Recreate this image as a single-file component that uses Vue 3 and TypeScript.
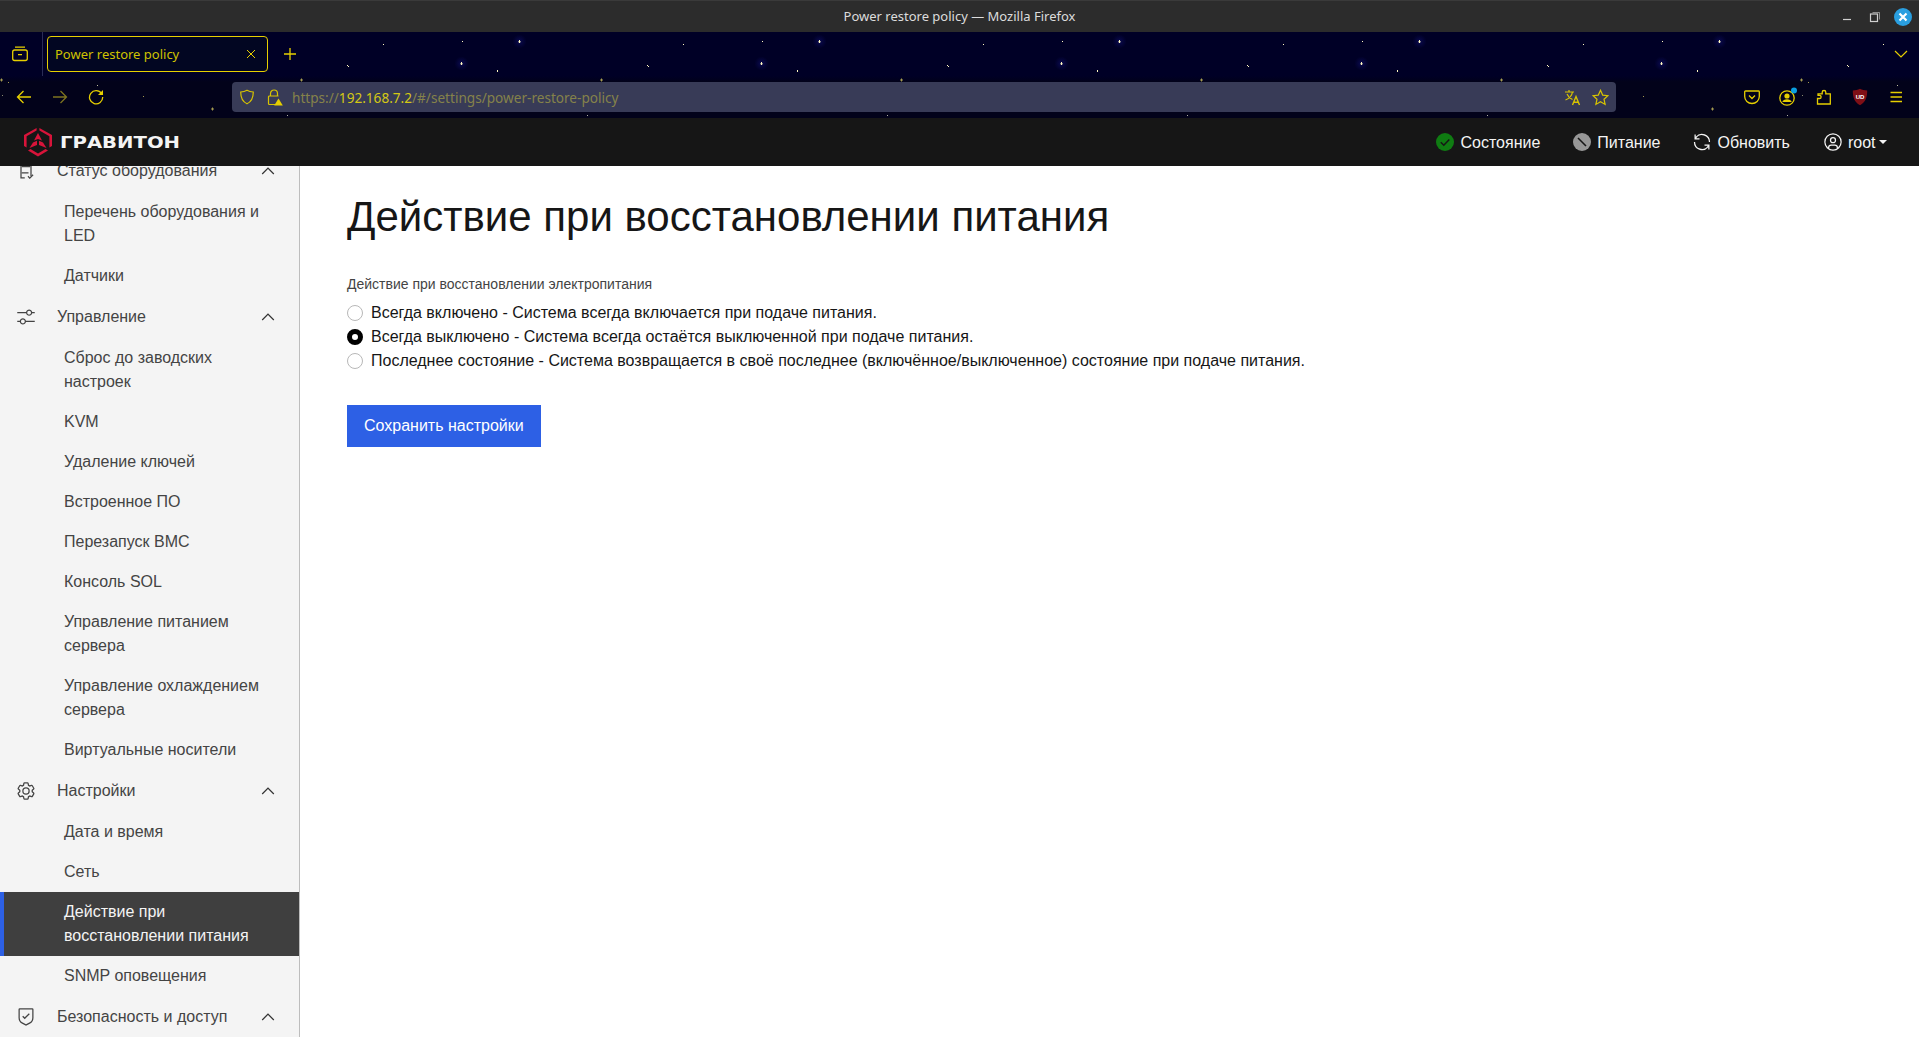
<template>
  <div class="page">
    <div class="titlebar">
      <span />
      <span class="window-title">Power restore policy — Mozilla Firefox</span>
      <div class="window-controls">
        <svg width="12" height="12" viewBox="0 0 12 12"><path d="M2 8.500h8" stroke="#d0d0d0" stroke-width="1.200" /></svg>
        <svg class="restore-icon" width="14" height="14" viewBox="0 0 14 14" fill="none" stroke="#d0d0d0">
          <path d="M4.500 2.500h7v7" opacity=".6" />
          <rect x="2.500" y="4" width="7" height="7.500" stroke-width="1.200" />
        </svg>
        <div class="close-btn">
          <svg width="10" height="10" viewBox="0 0 10 10"><path d="M1.500 1.500l7 7M8.500 1.500l-7 7" stroke="#fff" stroke-width="2.200" /></svg>
        </div>
      </div>
    </div>

    <div class="chrome">
      <svg class="stars" width="100%" height="86">
        <defs>
          <radialGradient id="glow">
            <stop offset="0" stop-color="#0a0a50" />
            <stop offset="1" stop-color="#0a0a50" stop-opacity="0" />
          </radialGradient>
          <pattern id="tile" width="300" height="86" patternUnits="userSpaceOnUse">
            <circle cx="219.500" cy="9.500" r="7" fill="url(#glow)" />
            <circle cx="161.500" cy="31.500" r="7" fill="url(#glow)" />
            <rect v-for="(s, i) in stars" :key="i" :x="s[0]" :y="s[1]" :width="s[2]" :height="s[3]" :fill="s[4]" />
          </pattern>
        </defs>
        <rect width="100%" height="86" fill="url(#tile)" />
      </svg>

      <div class="tabs-row">
        <button class="view-btn">
          <svg width="18" height="18" viewBox="0 0 18 18" fill="none" stroke="#e6cf00" stroke-width="1.300">
            <rect x="1.700" y="5" width="14.600" height="10.500" rx="2" />
            <path d="M4 2.200h10M7 9.600h4" />
          </svg>
        </button>
        <div class="tab">
          <span class="tab-title">Power restore policy</span>
          <svg width="10" height="10" viewBox="0 0 10 10"><path d="M1 1l8 8M9 1l-8 8" stroke="#e6cf00" stroke-width="1" /></svg>
        </div>
        <button class="plus-btn">
          <svg width="14" height="14" viewBox="0 0 14 14"><path d="M7 1v12M1 7h12" stroke="#e6cf00" stroke-width="1.300" /></svg>
        </button>
        <div class="tabs-fill" />
        <svg class="tabs-chevron" width="14" height="8" viewBox="0 0 14 8" fill="none"><path d="M1 1l6 6 6-6" stroke="#e6cf00" stroke-width="1.200" /></svg>
      </div>

      <div class="nav-row">
        <button class="tool-btn">
          <svg width="16" height="16" viewBox="0 0 16 16" fill="none" stroke="#e6cf00" stroke-width="1.300"><path d="M15 8H1.500M7.500 2l-6 6 6 6" /></svg>
        </button>
        <button class="tool-btn">
          <svg width="16" height="16" viewBox="0 0 16 16" fill="none" stroke="#7d7420" stroke-width="1.300"><path d="M1 8h13.500M8.500 2l6 6-6 6" /></svg>
        </button>
        <button class="tool-btn">
          <svg width="16" height="16" viewBox="0 0 16 16" fill="none" stroke="#e6cf00" stroke-width="1.300">
            <path d="M13.600 4.600A6.600 6.600 0 1 0 14.700 8" />
            <path d="M15 1v5h-5z" fill="#e6cf00" stroke="none" />
          </svg>
        </button>
        <div class="urlbar">
          <svg width="16" height="16" viewBox="0 0 16 16" fill="none" stroke="#d8c400" stroke-width="1.200">
            <path d="M8 1.200c2 1.100 4 1.600 6.300 1.800 0 5.600-1.600 9.600-6.300 11.800C3.300 12.600 1.700 8.600 1.700 3 4 2.800 6 2.300 8 1.200z" />
          </svg>
          <svg class="lock" width="16" height="17" viewBox="0 0 16 17" fill="none" stroke="#d8c400" stroke-width="1.200">
            <path d="M3.500 7V4.500a3.500 3.500 0 0 1 7 0V7M8 15.500H2.500a1 1 0 0 1-1-1V8a1 1 0 0 1 1-1h9" />
            <path d="M11.500 9.500l4.300 7h-8.600z" fill="#e6cf00" stroke="none" />
          </svg>
          <span class="url"><span class="url-dim">https://</span>192.168.7.2<span class="url-dim">/#/settings/power-restore-policy</span></span>
          <div class="tabs-fill" />
          <svg width="17" height="17" viewBox="0 0 17 17" fill="none" stroke="#d8c400" stroke-width="1.200">
            <path d="M1 3h9M5 1v2M8.500 3C8 6 5.500 9.500 1.500 11M3 5c1 2.500 3 4.500 5.500 5.500" />
            <path d="M8.500 16l3.500-8.500 3.500 8.500M9.800 13.300h4.400" stroke-width="1.400" />
          </svg>
          <svg class="star-icon" width="17" height="17" viewBox="0 0 17 17" fill="none" stroke="#d8c400" stroke-width="1.200">
            <path d="M8.500 1.300l2.200 4.800 5.200.6-3.900 3.500 1.100 5.200-4.600-2.700-4.600 2.700 1.100-5.200L1.100 6.700l5.200-.6z" />
          </svg>
        </div>
        <button class="tool-btn">
          <svg width="16" height="16" viewBox="0 0 16 16" fill="none" stroke="#e6cf00" stroke-width="1.300">
            <path d="M1.500 2h13a.8.8 0 0 1 .8.8v4.700c0 4-3.300 7-7.300 7S.7 11.500.7 7.500V2.800a.8.8 0 0 1 .8-.8z" />
            <path d="M5 6.500l3 3 3-3" />
          </svg>
        </button>
        <button class="tool-btn">
          <svg width="20" height="20" viewBox="0 0 20 20">
            <circle cx="9" cy="11" r="7.200" fill="none" stroke="#e6cf00" stroke-width="1.300" />
            <circle cx="9" cy="9" r="2.600" fill="#e6cf00" />
            <path d="M4.300 15c.6-2 2.300-2.800 4.700-2.800s4.100.8 4.700 2.800z" fill="#e6cf00" />
            <circle cx="16" cy="3.500" r="3" fill="#0a9ee0" />
          </svg>
        </button>
        <button class="tool-btn">
          <svg width="16" height="16" viewBox="0 0 16 16" fill="none" stroke="#e6cf00" stroke-width="1.300">
            <path d="M1.500 9.500h2a1.600 1.600 0 0 0 0-3.200h-1.500V4.800h4.200V3.300a1.800 1.800 0 0 1 3.600 0v1.500h4.500V15H1.500z" />
          </svg>
        </button>
        <button class="tool-btn">
          <svg width="16" height="18" viewBox="0 0 16 18">
            <path d="M8 .8c2.200 1 4.500 1.500 7.200 1.700 0 6.500-1.500 11.800-7.200 14.700C2.300 14.300.8 9 .8 2.500 3.500 2.300 5.800 1.800 8 .8z" fill="#7f0f16" />
            <text x="8" y="10.500" class="ub-text">UD</text>
          </svg>
        </button>
        <button class="tool-btn">
          <svg width="14" height="12" viewBox="0 0 14 12"><path d="M1.500 1.500h11.500M1.500 6h11.500M1.500 10.500h11.500" stroke="#e6cf00" stroke-width="1.300" /></svg>
        </button>
      </div>
    </div>

    <header class="app-header">
      <div class="brand">
        <svg width="28" height="29" viewBox="0 0 28 29" fill="#d8143a">
          <path d="M12.600 0v2.600L2.600 8.300V19.500L0 18V6.900zM15.400 0v2.600l10 5.700V19.500L28 18V6.900z" />
          <path d="M4 22.500L14 28.600 24 22.500 21.500 21 14 25.600 6.500 21z" />
          <path d="M14 5l4 7.600L14 11 10 12.600zM9 14.500l4 -1.700V17l-7.500 3zM19 14.500l-4 -1.700V17l7.500 3z" />
        </svg>
        <svg class="brand-name" width="122" height="20">
          <text x="0" y="15.500" textLength="120" lengthAdjust="spacingAndGlyphs">ГРАВИТОН</text>
        </svg>
      </div>
      <div class="tabs-fill" />
      <div class="head-item">
        <svg class="head-icon" width="20" height="20" viewBox="0 0 20 20">
          <circle cx="10" cy="10" r="9" fill="#0f7c12" />
          <path d="M5.800 10.200l3 3 5.500-5.800" fill="none" stroke="#161616" stroke-width="1.500" />
        </svg>
        <span class="head-text">Состояние</span>
      </div>
      <div class="head-item">
        <svg class="head-icon" width="20" height="20" viewBox="0 0 20 20">
          <circle cx="10" cy="10" r="9" fill="#979797" />
          <path d="M6 6l8 8" stroke="#161616" stroke-width="1.600" />
        </svg>
        <span class="head-text">Питание</span>
      </div>
      <div class="head-item wide">
        <svg class="head-icon" width="20" height="20" viewBox="0 0 32 32" fill="#f4f4f4">
          <path d="M12 10H6.780A11 11 0 0 1 27 16h2A13 13 0 0 0 6 7.680V4H4v8h8zM20 22h5.220A11 11 0 0 1 5 16H3a13 13 0 0 0 23 8.320V28h2v-8h-8z" />
        </svg>
        <span class="head-text">Обновить</span>
      </div>
      <div class="head-item last">
        <svg class="head-icon" width="20" height="20" viewBox="0 0 32 32" fill="#f4f4f4">
          <path d="M16 8a5 5 0 1 0 5 5a5 5 0 0 0-5-5zm0 8a3 3 0 1 1 3-3a3 3 0 0 1-3 3z" />
          <path d="M16 2a14 14 0 1 0 14 14A14 14 0 0 0 16 2zm-6 24.377V25a3 3 0 0 1 3-3h6a3 3 0 0 1 3 3v1.377a11.899 11.899 0 0 1-12 0zm13.993-1.451A5 5 0 0 0 19 20h-6a5 5 0 0 0-4.992 4.926a12 12 0 1 1 15.985 0z" />
        </svg>
        <span class="head-text">root</span>
        <span class="caret" />
      </div>
    </header>

    <div class="body">
      <aside class="sidebar">
        <nav class="side-nav">
          <template v-for="group in groups" :key="group.title">
            <div class="group-row">
              <svg class="group-icon" width="20" height="20" viewBox="0 0 32 32" fill="#444">
                <path v-for="d in group.icon" :key="d" :d="d" />
              </svg>
              <span class="group-title">{{ group.title }}</span>
              <svg width="20" height="20" viewBox="0 0 32 32" fill="#333">
                <path d="M16 10l10 10-1.400 1.400L16 12.800l-8.600 8.600L6 20z" />
              </svg>
            </div>
            <a
              v-for="item in group.items"
              :key="item"
              class="nav-item"
              :class="{ active: item === activeItem }"
            >{{ item }}</a>
          </template>
        </nav>
      </aside>

      <main class="content">
        <h1>Действие при восстановлении питания</h1>
        <div class="field-label">Действие при восстановлении электропитания</div>
        <label v-for="opt in options" :key="opt.value" class="radio-row">
          <input v-model="policy" type="radio" name="policy" :value="opt.value" />
          <span>{{ opt.label }}</span>
        </label>
        <button class="save-btn">Сохранить настройки</button>
      </main>
    </div>
  </div>
</template>

<script setup lang="ts">
import { ref } from "vue";

interface NavGroup {
  title: string;
  icon: string[];
  items: string[];
}

// tile of the browser theme: x, y, w, h, colour (y counted from the tab strip)
const stars: [number, number, number, number, string][] = [
  [83, 12, 1, 1, "#fff8c0"],
  [47, 33, 1, 1, "#fff8c0"],
  [48, 34, 1, 1, "#fff8c0"],
  [162, 9, 1, 1, "#fff8c0"],
  [219, 9, 1, 1, "#fff8c0"],
  [218, 9.5, 3, 0.7, "#fff8c0"],
  [219, 8, 1, 3, "#fff8c0"],
  [161, 31, 1, 1, "#fff8c0"],
  [160, 31.5, 3, 0.7, "#fff8c0"],
  [161, 30, 1, 3, "#fff8c0"],
  [197, 38, 1, 2, "#fff8c0"],
  [0, 47.5, 3, 1, "#a39a50"],
  [1, 46.5, 1, 3, "#a39a50"],
  [8, 50, 1, 1, "#a39a50"],
  [2, 63, 1, 1, "#8a8a70"],
  [97, 53, 1, 1, "#c0c0a0"],
  [143, 64, 1, 1, "#a39a50"],
  [211, 76.5, 3, 1, "#a39a50"],
  [212, 75.5, 1, 3, "#a39a50"],
  [287, 83, 1, 1, "#b0b0a0"],
];

const statusIcon = [
  "M7 0h18v24h-2V2H9v24h5v2H7z",
  "M9 8h14v2H9zM9 18h11v2H9z",
  "M22 28.600l-3.500-3.500 1.400-1.400 2.100 2.100 4.600-4.600 1.400 1.400z",
];
const adjustIcon = [
  "M30 8h-4.100c-.5-2.300-2.500-4-4.900-4s-4.400 1.700-4.900 4H2v2h14.100c.5 2.300 2.500 4 4.900 4s4.400-1.700 4.900-4H30V8zm-9 4c-1.700 0-3-1.300-3-3s1.300-3 3-3s3 1.300 3 3s-1.300 3-3 3zM2 24h4.100c.5 2.300 2.500 4 4.900 4s4.400-1.700 4.900-4H30v-2H15.900c-.5-2.300-2.500-4-4.900-4s-4.400 1.700-4.900 4H2v2zm9-4c1.700 0 3 1.300 3 3s-1.300 3-3 3s-3-1.300-3-3s1.300-3 3-3z",
];
const settingsIcon = [
  "M27 16.760c0-.25 0-.5 0-.76s0-.51 0-.77l1.920-1.680A2 2 0 0 0 29.300 11L26.940 7a2 2 0 0 0-1.730-1a2 2 0 0 0-.64.1l-2.430.82a11.350 11.350 0 0 0-1.310-.75l-.51-2.520a2 2 0 0 0-2-1.610h-4.680a2 2 0 0 0-2 1.610l-.51 2.520a11.480 11.480 0 0 0-1.320.75l-2.380-.86A2 2 0 0 0 6.790 6a2 2 0 0 0-1.730 1L2.700 11a2 2 0 0 0 .41 2.510L5 15.240c0 .25 0 .5 0 .76s0 .51 0 .77l-1.890 1.680A2 2 0 0 0 2.700 21l2.360 4a2 2 0 0 0 1.730 1a2 2 0 0 0 .64-.1l2.430-.82a11.350 11.350 0 0 0 1.310.75l.51 2.520a2 2 0 0 0 2 1.610h4.720a2 2 0 0 0 2-1.610l.51-2.520a11.480 11.480 0 0 0 1.320-.75l2.420.82a2 2 0 0 0 .64.1a2 2 0 0 0 1.730-1l2.280-4a2 2 0 0 0-.41-2.510ZM25.210 24l-3.430-1.160a8.860 8.860 0 0 1-2.710 1.570L18.360 28h-4.720l-.71-3.550a9.360 9.360 0 0 1-2.700-1.570L6.790 24l-2.360-4l2.720-2.400a8.900 8.900 0 0 1 0-3.130L4.430 12l2.360-4l3.430 1.160a8.860 8.860 0 0 1 2.710-1.570L13.640 4h4.720l.71 3.550a9.360 9.360 0 0 1 2.700 1.570L25.210 8l2.360 4l-2.720 2.400a8.900 8.900 0 0 1 0 3.130L27.570 20Z",
  "M16 22a6 6 0 1 1 6-6a5.940 5.940 0 0 1-6 6Zm0-10a3.910 3.910 0 0 0-4 4a3.910 3.910 0 0 0 4 4a3.910 3.910 0 0 0 4-4a3.910 3.910 0 0 0-4-4Z",
];
const securityIcon = [
  "M14 16.590 11.410 14 10 15.410l4 4 8-8L20.590 10 14 16.590z",
  "M16 30l-6.180-3.300A11 11 0 0 1 4 17V4a2 2 0 0 1 2-2h20a2 2 0 0 1 2 2v13a11 11 0 0 1-5.820 9.700ZM6 4v13a9 9 0 0 0 4.760 7.940L16 27.730l5.240-2.790A9 9 0 0 0 26 17V4Z",
];

const groups: NavGroup[] = [
  {
    title: "Статус оборудования",
    icon: statusIcon,
    items: ["Перечень оборудования и LED", "Датчики"],
  },
  {
    title: "Управление",
    icon: adjustIcon,
    items: [
      "Сброс до заводских настроек",
      "KVM",
      "Удаление ключей",
      "Встроенное ПО",
      "Перезапуск BMC",
      "Консоль SOL",
      "Управление питанием сервера",
      "Управление охлаждением сервера",
      "Виртуальные носители",
    ],
  },
  {
    title: "Настройки",
    icon: settingsIcon,
    items: ["Дата и время", "Сеть", "Действие при восстановлении питания", "SNMP оповещения"],
  },
  {
    title: "Безопасность и доступ",
    icon: securityIcon,
    items: [],
  },
];

const activeItem = "Действие при восстановлении питания";

const options = [
  { value: "on", label: "Всегда включено - Система всегда включается при подаче питания." },
  { value: "off", label: "Всегда выключено - Система всегда остаётся выключенной при подаче питания." },
  {
    value: "last",
    label: "Последнее состояние - Система возвращается в своё последнее (включённое/выключенное) состояние при подаче питания.",
  },
];

const policy = ref("off");
</script>

<style>
html,
body {
  margin: 0;
  background: #fff;
}
</style>

<style scoped>
.page {
  height: 1037px;
  overflow: hidden;
  display: flex;
  flex-direction: column;
  font-family: "Liberation Sans", Arial, sans-serif;
  color: #161616;
}
button {
  border: 0;
  background: none;
  padding: 0;
  display: flex;
  align-items: center;
  justify-content: center;
}

.titlebar {
  height: 32px;
  flex: none;
  display: grid;
  grid-template-columns: 1fr auto 1fr;
  align-items: center;
  background: #2c2c2c;
  border-top: 1px solid #3a3a3a;
  box-sizing: border-box;
  font-family: "Noto Sans", sans-serif;
  font-size: 13px;
  color: #dcdcdc;
}
.window-title {
  padding-bottom: 2px;
}
.window-controls {
  justify-self: end;
  display: flex;
  align-items: center;
  gap: 12px;
  padding-right: 7px;
}
.restore-icon {
  margin-left: 3px;
}
.close-btn {
  width: 18px;
  height: 18px;
  border-radius: 50%;
  background: #2a9fe0;
  display: flex;
  align-items: center;
  justify-content: center;
}

.chrome {
  position: relative;
  height: 86px;
  flex: none;
  background: linear-gradient(#000026 0, #000026 44px, #02021a 50px, #02021a 100%);
  font-family: "Noto Sans", sans-serif;
}
.stars {
  position: absolute;
  inset: 0;
}
.tabs-row,
.nav-row {
  position: relative;
  display: flex;
  align-items: center;
}
.tabs-row {
  height: 44px;
}
.nav-row {
  height: 42px;
  padding: 0 5px 0 6px;
}
.view-btn {
  width: 43px;
  height: 44px;
  padding-right: 2px;
  border-right: 1px solid #2a2c56;
}
.tab {
  width: 221px;
  height: 36px;
  margin-left: 4px;
  box-sizing: border-box;
  padding: 0 11px 0 7px;
  display: flex;
  align-items: center;
  justify-content: space-between;
  border: 1.5px solid #e6cf00;
  border-radius: 4px;
  background: #020622;
  color: #cfc200;
  font-size: 13px;
}
.plus-btn {
  width: 44px;
  height: 36px;
}
.tabs-fill {
  flex: 1;
}
.tabs-chevron {
  margin-right: 11px;
}
.tool-btn {
  width: 36px;
  height: 36px;
}
.urlbar {
  flex: 1;
  height: 30px;
  margin: 0 118px;
  padding: 0 7px;
  display: flex;
  align-items: center;
  background: #383b57;
  border-radius: 4px;
  box-sizing: border-box;
}
.lock {
  margin-left: 12px;
}
.url {
  margin-left: 9px;
  font-size: 13.6px;
  color: #d4c814;
}
.url-dim {
  color: #85824a;
}
.star-icon {
  margin-left: 11px;
}
.ub-text {
  font-family: "Liberation Sans", sans-serif;
  font-size: 6px;
  font-weight: 700;
  fill: #fff;
  text-anchor: middle;
}

.app-header {
  height: 48px;
  flex: none;
  display: flex;
  align-items: center;
  background: #161616;
  color: #f4f4f4;
  font-size: 16px;
  padding-right: 32px;
  box-sizing: border-box;
}
.brand {
  display: flex;
  align-items: center;
  padding-left: 24px;
}
.brand-name {
  margin-left: 8px;
  font-family: "DejaVu Sans", sans-serif;
  font-size: 15px;
  font-weight: 700;
  fill: #f4f4f4;
}
.head-item {
  display: flex;
  align-items: center;
  margin-right: 32px;
}
.head-item.wide {
  margin-right: 33px;
}
.head-item.last {
  margin-right: 0;
}
.head-text {
  padding-top: 2px;
}
.head-icon {
  margin-right: 5px;
}
.caret {
  width: 0;
  height: 0;
  margin-left: 3.5px;
  border: 4px solid transparent;
  border-top-color: #f4f4f4;
  border-bottom: 0;
}

.body {
  flex: 1;
  display: flex;
  min-height: 0;
}
.sidebar {
  width: 300px;
  box-sizing: border-box;
  flex: none;
  overflow: hidden;
  background: #f4f4f4;
  border-right: 1px solid #bdbdbd;
}
.side-nav {
  margin-top: -16px;
}
.group-row {
  height: 42px;
  display: flex;
  align-items: center;
  padding: 0 21px 0 16px;
  font-size: 16px;
  color: #444;
}
.group-icon {
  flex: none;
}
.group-title {
  flex: 1;
  margin-left: 21px;
}
.nav-item {
  display: block;
  padding: 8px 32px 8px 64px;
  font-size: 16px;
  line-height: 24px;
  color: #444;
}
.nav-item.active {
  padding-left: 60px;
  background: #3f3f3f;
  border-left: 4px solid #2d60e5;
  color: #f4f4f4;
}

.content {
  flex: 1;
  padding: 26px 47px 0;
}
h1 {
  margin: 0 0 32px;
  font-size: 42px;
  font-weight: 400;
  line-height: 50px;
  color: #161616;
}
.field-label {
  margin-bottom: 7px;
  font-size: 14px;
  line-height: 20px;
  color: #444;
}
.radio-row {
  display: flex;
  align-items: center;
  height: 24px;
  font-size: 16px;
}
.radio-row input {
  appearance: none;
  width: 16px;
  height: 16px;
  margin: 0 8px 0 0;
  box-sizing: border-box;
  border: 1px solid #b8b8b8;
  border-radius: 50%;
  background: #fff;
}
.radio-row input:checked {
  border: 5px solid #000;
}
.save-btn {
  margin-top: 32px;
  height: 42px;
  padding: 0 17px;
  background: #2d60e5;
  color: #fff;
  font-family: inherit;
  font-size: 16px;
}
</style>
